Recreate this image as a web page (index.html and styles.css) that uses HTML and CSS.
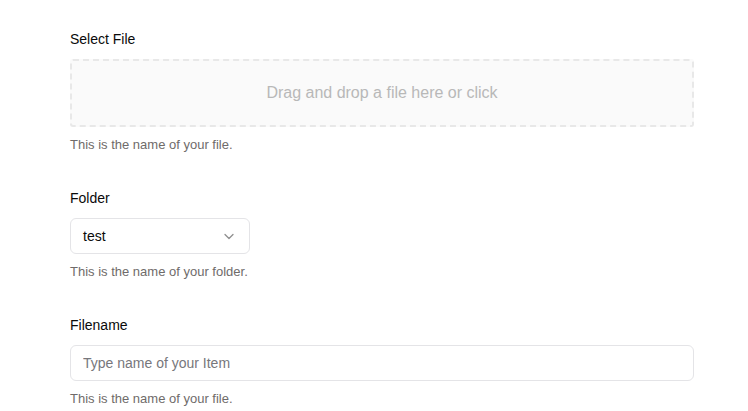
FILE: index.html
```html
<!DOCTYPE html>
<html>
<head>
<meta charset="utf-8">
<link rel="stylesheet" href="styles.css">
</head>
<body>
<form class="form">
  <div class="field">
    <label class="label">Select File</label>
    <div class="dropzone">Drag and drop a file here or click</div>
    <p class="help">This is the name of your file.</p>
  </div>
  <div class="field">
    <label class="label">Folder</label>
    <div class="select">
      <span>test</span>
      <svg class="chev" width="16" height="16" viewBox="0 0 16 16" fill="none" stroke="#8f8f8f" stroke-width="1.3" stroke-linecap="round" stroke-linejoin="round"><path d="M4 6.5l4 4 4-4"/></svg>
    </div>
    <p class="help">This is the name of your folder.</p>
  </div>
  <div class="field">
    <label class="label">Filename</label>
    <input class="input" type="text" placeholder="Type name of your Item">
    <p class="help">This is the name of your file.</p>
  </div>
</form>
</body>
</html>
```
FILE: styles.css
```css
* { box-sizing: border-box; }
html, body { margin: 0; background: #fff; }
body {
  font-family: "Liberation Sans", Arial, sans-serif;
  color: #0a0a0a;
  padding: 29px 54px 0 70px;
}
.form { display: flex; flex-direction: column; gap: 34px; }
.field { display: flex; flex-direction: column; }
.label { font-size: 14px; line-height: 20px; margin-bottom: 10px; }
.dropzone {
  height: 68px;
  border: 2px dashed #e8e8e8;
  border-radius: 3px;
  background: #fafafa;
  display: flex; align-items: center; justify-content: center;
  font-size: 16px;
  color: #b8b8b8;
}
.help { margin: 9px 0 0; font-size: 13px; line-height: 18px; color: #6f6b6a; }
.select {
  width: 180px; height: 36px;
  border: 1px solid #e4e4e7;
  border-radius: 6px;
  display: flex; align-items: center; justify-content: space-between;
  padding: 0 12px 0 12px;
  font-size: 14px;
}
.input {
  width: 100%; height: 36px;
  border: 1px solid #e4e4e7;
  border-radius: 6px;
  padding: 0 12px;
  font-family: inherit; font-size: 14px;
  outline: none;
}
.input::placeholder { color: #77777c; }
```
